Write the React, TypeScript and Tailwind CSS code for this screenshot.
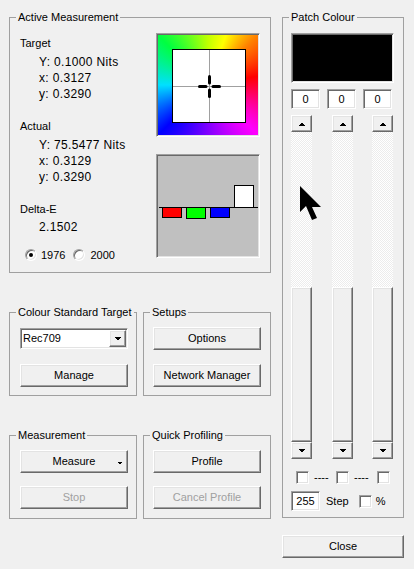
import React from "react";

const RAISED =
  "bg-[#f0f0f0] border border-t-white border-l-white border-r-[#696969] border-b-[#696969] shadow-[inset_-1px_-1px_0_#a0a0a0,inset_1px_1px_0_#e3e3e3]";
const SUNKEN =
  "border border-t-[#a0a0a0] border-l-[#a0a0a0] border-r-white border-b-white shadow-[inset_1px_1px_0_#696969,inset_-1px_-1px_0_#e3e3e3]";

function Group({
  title,
  className,
  children,
}: {
  title: string;
  className: string;
  children?: React.ReactNode;
}) {
  return (
    <fieldset className={`border border-[#a0a0a0] min-w-0 ${className}`}>
      <legend className="ml-[6px] px-[2px] leading-[14px]">{title}</legend>
      {children}
    </fieldset>
  );
}

function Tri({ down }: { down?: boolean }) {
  return (
    <svg width="7" height="4" viewBox="0 0 7 4" shapeRendering="crispEdges">
      <polygon
        points={down ? "0,0 7,0 3.5,3.5" : "0,4 7,4 3.5,0.5"}
        fill="#000"
      />
    </svg>
  );
}

function Button({
  label,
  disabled,
  className,
  children,
}: {
  label: string;
  disabled?: boolean;
  className: string;
  children?: React.ReactNode;
}) {
  return (
    <div
      className={`relative flex items-center justify-center h-[23px] ${RAISED} ${className} ${
        disabled ? "text-[#a0a0a0]" : "text-black"
      }`}
    >
      {label}
      {children}
    </div>
  );
}

function Check() {
  return <div className={`w-[13px] h-[13px] bg-white shrink-0 ${SUNKEN}`} />;
}

function Radio({ checked }: { checked?: boolean }) {
  return (
    <div className="w-[12px] h-[12px] rounded-full bg-white border border-t-[#a0a0a0] border-l-[#a0a0a0] border-r-white border-b-white shadow-[inset_1px_1px_0_#696969,inset_-1px_-1px_0_#e3e3e3] flex items-center justify-center">
      {checked && <div className="w-[4px] h-[4px] rounded-full bg-black" />}
    </div>
  );
}

function ScrollBar({ className }: { className: string }) {
  return (
    <div className={`flex flex-col w-[21px] h-[344px] ${className}`}>
      <div className={`h-[17px] flex items-center justify-center ${RAISED}`}>
        <Tri />
      </div>
      <div className="flex-1 bg-[repeating-conic-gradient(#ffffff_0%_25%,#ececec_0%_50%)] bg-[length:2px_2px]" />
      <div className={`h-[155px] ${RAISED}`} />
      <div className={`h-[17px] flex items-center justify-center ${RAISED}`}>
        <Tri down />
      </div>
    </div>
  );
}

export default function App() {
  return (
    <div className="relative w-[414px] h-[569px] overflow-hidden bg-[#f0f0f0] text-[11px] text-black font-['Liberation_Sans',Arial,sans-serif] flex pt-[10px] pl-[9px] gap-[11px]">
      {/* Left column */}
      <div className="w-[262px] flex flex-col">
        <Group title="Active Measurement" className="h-[263px]">
          <div className="flex justify-between pt-[9px] pl-[10px] pr-[10px]">
            <div className="flex flex-col leading-[16px]">
              <div className="mt-[2px]">Target</div>
              <div className="mt-[3px] pl-[19px] text-[12px] tracking-[0.35px]">Y: 0.1000 Nits</div>
              <div className="pl-[19px] text-[12px] tracking-[0.35px]">x: 0.3127</div>
              <div className="pl-[19px] text-[12px] tracking-[0.35px]">y: 0.3290</div>
              <div className="mt-[16px]">Actual</div>
              <div className="mt-[3px] pl-[19px] text-[12px] tracking-[0.35px]">Y: 75.5477 Nits</div>
              <div className="pl-[19px] text-[12px] tracking-[0.35px]">x: 0.3129</div>
              <div className="pl-[19px] text-[12px] tracking-[0.35px]">y: 0.3290</div>
              <div className="mt-[16px]">Delta-E</div>
              <div className="mt-[2px] pl-[19px] text-[12px] tracking-[0.35px]">2.1502</div>
              <div className="mt-[12px] flex items-center pl-[5px] h-[16px]">
                <Radio checked />
                <span className="ml-[4px]">1976</span>
                <div className="ml-[8px]">
                  <Radio />
                </div>
                <span className="ml-[5px]">2000</span>
              </div>
            </div>
            <div className="flex flex-col gap-[17px]">
              <div
                className={`w-[104px] h-[104px] p-[15px] bg-[conic-gradient(#c0ff00_0deg,#ffff00_20deg,#ff8000_45deg,#ff0000_80deg,#ff00ff_135deg,#8000ff_180deg,#0000ff_225deg,#00e0ff_270deg,#00ff40_315deg,#c0ff00_360deg)] ${SUNKEN}`}
              >
                <div className="w-[74px] h-[74px] border border-black bg-white">
                  <svg width="72" height="72" viewBox="0 0 72 72" className="block">
                    <line x1="36.5" y1="0" x2="36.5" y2="72" stroke="#a0a0a0" strokeWidth="1" />
                    <line x1="0" y1="36.5" x2="72" y2="36.5" stroke="#a0a0a0" strokeWidth="1" />
                    <g stroke="#000" strokeWidth="3" strokeLinecap="round">
                      <line x1="36.5" y1="26.5" x2="36.5" y2="33" />
                      <line x1="36.5" y1="40" x2="36.5" y2="46.5" />
                      <line x1="26.5" y1="36.5" x2="33" y2="36.5" />
                      <line x1="40" y1="36.5" x2="46.5" y2="36.5" />
                    </g>
                  </svg>
                </div>
              </div>
              <div className={`w-[104px] h-[104px] bg-[#c0c0c0] ${SUNKEN}`}>
                <svg width="102" height="102" viewBox="0 0 102 102" className="block" shapeRendering="crispEdges">
                  <rect x="5.5" y="52.5" width="19" height="10" fill="#ff0000" stroke="#000" />
                  <rect x="29.5" y="52.5" width="19" height="11" fill="#00ff00" stroke="#000" />
                  <rect x="53.5" y="52.5" width="19" height="10" fill="#0000ff" stroke="#000" />
                  <rect x="77.5" y="30.5" width="19" height="22" fill="#ffffff" stroke="#000" />
                  <line x1="2" y1="52.5" x2="101" y2="52.5" stroke="#000" />
                </svg>
              </div>
            </div>
          </div>
        </Group>

        <div className="flex gap-[6px] mt-[32px]">
          <Group title="Colour Standard Target" className="w-[128px] h-[91px]">
            <div className="pt-[9px] pl-[10px]">
              <div className={`w-[108px] h-[21px] bg-white flex items-center justify-between pl-[2px] pr-[1px] ${SUNKEN}`}>
                <span>Rec709</span>
                <div className={`w-[17px] h-[17px] flex items-center justify-center ${RAISED}`}>
                  <Tri down />
                </div>
              </div>
              <Button label="Manage" className="w-[108px] mt-[15px]" />
            </div>
          </Group>
          <Group title="Setups" className="w-[128px] h-[91px]">
            <div className="pt-[8px] pl-[9px]">
              <Button label="Options" className="w-[108px]" />
              <Button label="Network Manager" className="w-[108px] mt-[14px]" />
            </div>
          </Group>
        </div>

        <div className="flex gap-[6px] mt-[32px]">
          <Group title="Measurement" className="w-[128px] h-[91px]">
            <div className="pt-[8px] pl-[10px]">
              <Button label="Measure" className="w-[108px]">
                <div className="absolute right-[5px] bottom-[7px] flex">
                  <svg width="5" height="3" viewBox="0 0 5 3" shapeRendering="crispEdges">
                    <polygon points="0,0 5,0 2.5,2.5" fill="#000" />
                  </svg>
                </div>
              </Button>
              <Button label="Stop" disabled className="w-[108px] mt-[13px]" />
            </div>
          </Group>
          <Group title="Quick Profiling" className="w-[128px] h-[91px]">
            <div className="pt-[8px] pl-[9px]">
              <Button label="Profile" className="w-[108px]" />
              <Button label="Cancel Profile" disabled className="w-[108px] mt-[13px]" />
            </div>
          </Group>
        </div>
      </div>

      {/* Right column */}
      <div className="w-[122px] flex flex-col">
        <Group title="Patch Colour" className="h-[508px]">
          <div className="pt-[9px] pl-[8px] flex flex-col">
            <div className={`w-[103px] h-[50px] bg-black ${SUNKEN}`} />
            <div className="flex gap-[7px] mt-[6px]">
              {["0", "0", "0"].map((v, i) => (
                <div
                  key={i}
                  className={`w-[29px] h-[20px] bg-white flex items-center justify-center ${SUNKEN}`}
                >
                  {v}
                </div>
              ))}
            </div>
            <div className="flex mt-[6px]">
              <ScrollBar className="" />
              <ScrollBar className="ml-[20px]" />
              <ScrollBar className="ml-[19px]" />
            </div>
            <div className="flex items-center h-[13px] mt-[12px]">
              <div className="ml-[5px]">
                <Check />
              </div>
              <span className="ml-[5px] w-[17px]">----</span>
              <div className="ml-[5px]">
                <Check />
              </div>
              <span className="ml-[5px] w-[17px]">----</span>
              <div className="ml-[6px]">
                <Check />
              </div>
            </div>
            <div className="flex items-center mt-[7px]">
              <div className={`w-[29px] h-[20px] bg-white flex items-center justify-center ${SUNKEN}`}>
                255
              </div>
              <span className="ml-[6px]">Step</span>
              <div className="ml-[10px]">
                <Check />
              </div>
              <span className="ml-[4px]">%</span>
            </div>
          </div>
        </Group>
        <Button label="Close" className="w-[122px] mt-[17px]" />
      </div>

      {/* Mouse cursor overlay */}
      <svg
        className="absolute left-[300px] top-[186px]"
        width="22"
        height="36"
        viewBox="0 0 22 36"
      >
        <polygon points="0,0 0,26 6,20 12,34 17,32 12,21 21,21" fill="#000" />
      </svg>
    </div>
  );
}
